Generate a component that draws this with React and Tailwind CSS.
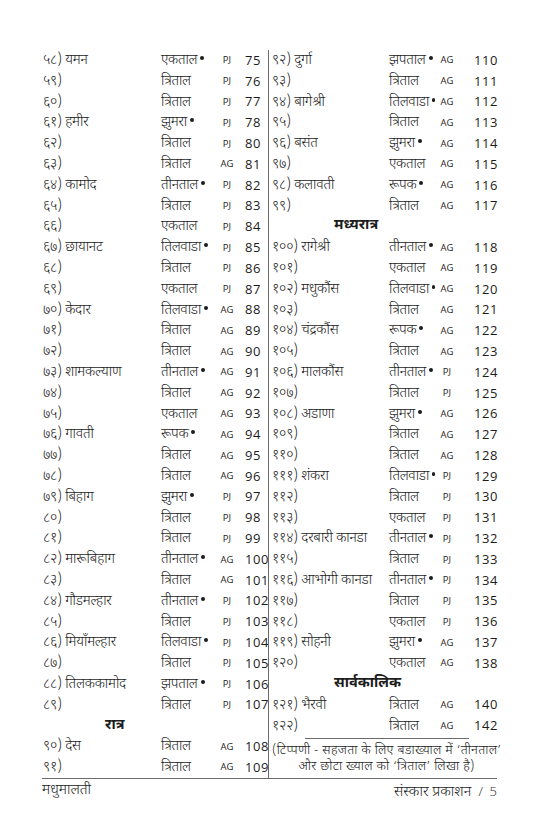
import React from 'react';

const left = [
  ['५८) यमन', 'एकताल', true, 'PJ', '75'],
  ['५९)', 'त्रिताल', false, 'PJ', '76'],
  ['६०)', 'त्रिताल', false, 'PJ', '77'],
  ['६१) हमीर', 'झुमरा', true, 'PJ', '78'],
  ['६२)', 'त्रिताल', false, 'PJ', '80'],
  ['६३)', 'त्रिताल', false, 'AG', '81'],
  ['६४) कामोद', 'तीनताल', true, 'PJ', '82'],
  ['६५)', 'त्रिताल', false, 'PJ', '83'],
  ['६६)', 'एकताल', false, 'PJ', '84'],
  ['६७) छायानट', 'तिलवाडा', true, 'PJ', '85'],
  ['६८)', 'त्रिताल', false, 'PJ', '86'],
  ['६९)', 'एकताल', false, 'PJ', '87'],
  ['७०) केदार', 'तिलवाडा', true, 'AG', '88'],
  ['७१)', 'त्रिताल', false, 'AG', '89'],
  ['७२)', 'त्रिताल', false, 'AG', '90'],
  ['७३) शामकल्याण', 'तीनताल', true, 'AG', '91'],
  ['७४)', 'त्रिताल', false, 'AG', '92'],
  ['७५)', 'एकताल', false, 'AG', '93'],
  ['७६) गावती', 'रूपक', true, 'AG', '94'],
  ['७७)', 'त्रिताल', false, 'AG', '95'],
  ['७८)', 'त्रिताल', false, 'AG', '96'],
  ['७९) बिहाग', 'झुमरा', true, 'PJ', '97'],
  ['८०)', 'त्रिताल', false, 'PJ', '98'],
  ['८१)', 'त्रिताल', false, 'PJ', '99'],
  ['८२) मारूबिहाग', 'तीनताल', true, 'AG', '100'],
  ['८३)', 'त्रिताल', false, 'AG', '101'],
  ['८४) गौडमल्हार', 'तीनताल', true, 'PJ', '102'],
  ['८५)', 'त्रिताल', false, 'PJ', '103'],
  ['८६) मियाँमल्हार', 'तिलवाडा', true, 'PJ', '104'],
  ['८७)', 'त्रिताल', false, 'PJ', '105'],
  ['८८) तिलककामोद', 'झपताल', true, 'PJ', '106'],
  ['८९)', 'त्रिताल', false, 'PJ', '107'],
  'रात्र',
  ['९०) देस', 'त्रिताल', false, 'AG', '108'],
  ['९१)', 'त्रिताल', false, 'AG', '109'],
];

const right = [
  ['९२) दुर्गा', 'झपताल', true, 'AG', '110'],
  ['९३)', 'त्रिताल', false, 'AG', '111'],
  ['९४) बागेश्री', 'तिलवाडा', true, 'AG', '112'],
  ['९५)', 'त्रिताल', false, 'AG', '113'],
  ['९६) बसंत', 'झुमरा', true, 'AG', '114'],
  ['९७)', 'एकताल', false, 'AG', '115'],
  ['९८) कलावती', 'रूपक', true, 'AG', '116'],
  ['९९)', 'त्रिताल', false, 'AG', '117'],
  'मध्यरात्र',
  ['१००) रागेश्री', 'तीनताल', true, 'AG', '118'],
  ['१०१)', 'एकताल', false, 'AG', '119'],
  ['१०२) मधुकौंस', 'तिलवाडा', true, 'AG', '120'],
  ['१०३)', 'त्रिताल', false, 'AG', '121'],
  ['१०४) चंद्रकौंस', 'रूपक', true, 'AG', '122'],
  ['१०५)', 'त्रिताल', false, 'AG', '123'],
  ['१०६) मालकौंस', 'तीनताल', true, 'PJ', '124'],
  ['१०७)', 'त्रिताल', false, 'PJ', '125'],
  ['१०८) अडाणा', 'झुमरा', true, 'AG', '126'],
  ['१०९)', 'त्रिताल', false, 'AG', '127'],
  ['११०)', 'त्रिताल', false, 'AG', '128'],
  ['१११) शंकरा', 'तिलवाडा', true, 'PJ', '129'],
  ['११२)', 'त्रिताल', false, 'PJ', '130'],
  ['११३)', 'एकताल', false, 'PJ', '131'],
  ['११४) दरबारी कानडा', 'तीनताल', true, 'PJ', '132'],
  ['११५)', 'त्रिताल', false, 'PJ', '133'],
  ['११६) आभोगी कानडा', 'तीनताल', true, 'PJ', '134'],
  ['११७)', 'त्रिताल', false, 'PJ', '135'],
  ['११८)', 'एकताल', false, 'PJ', '136'],
  ['११९) सोहनी', 'झुमरा', true, 'AG', '137'],
  ['१२०)', 'एकताल', false, 'AG', '138'],
  'सार्वकालिक',
  ['१२१) भैरवी', 'त्रिताल', false, 'AG', '140'],
  ['१२२)', 'त्रिताल', false, 'AG', '142'],
];

const deva = { fontFamily: '"Noto Sans Devanagari", "Noto Serif Devanagari", "Lohit Devanagari", "Noto Sans", sans-serif' };
const latin = { fontFamily: '"Open Sans", "Noto Sans", sans-serif' };

function Rows({ items, cols, numPad }) {
  return items.map((r, i) => {
    if (typeof r === 'string') {
      return (
        <div key={i} className="h-[20.8px] leading-[20.8px] pl-[62px] font-bold text-[14.5px]">{r}</div>
      );
    }
    const [name, taal, dot, tag, page] = r;
    return (
      <div key={i} className={`grid ${cols} h-[20.8px] items-center whitespace-nowrap`}>
        <span className="text-[14px] font-light tracking-[-0.2px]">{name}</span>
        <span className="text-[14px] font-light tracking-[-0.3px] flex items-center">
          {taal}
          {dot && <span className="inline-block w-[4px] h-[4px] rounded-full bg-[#1c1c1c] ml-[3px] mb-[5px]"></span>}
        </span>
        <span className="text-[9.5px] text-center" style={latin}>{tag}</span>
        <span className={`text-[13px] tracking-[0.6px] ${numPad}`} style={latin}>{page}</span>
      </div>
    );
  });
}

export default function App() {
  return (
    <div className="w-[535px] h-[827px] bg-white text-[#1c1c1c] pt-[50px] pl-[42px] pr-[38px]" style={deva}>
      <div className="flex border-b-[1.5px] border-[#6b6b6b]">
        <div className="w-[226px] pl-[1px]">
          <Rows items={left} cols="grid-cols-[118px_54px_24px_1fr]" numPad="pl-[6px]" />
        </div>
        <div className="flex-1 border-l-[1.5px] border-[#6b6b6b] pl-[3px]">
          <Rows items={right} cols="grid-cols-[117px_46px_24px_1fr]" numPad="pl-[15px]" />
          <div className="mx-auto w-[164px] border-t-[1.5px] border-[#6b6b6b] mt-[2px]"></div>
          <div className="text-[13px] font-light leading-[16px] text-center whitespace-nowrap mt-[4px]">
            <div className="tracking-[0.3px]">(टिप्पणी - सहजता के लिए बडाख्याल में ‘तीनताल’</div>
            <div className="tracking-[0.3px]">और छोटा ख्याल को ‘त्रिताल’ लिखा है)</div>
          </div>
        </div>
      </div>
      <div className="flex justify-between text-[14.5px] font-light leading-[22px] pt-[1px]">
        <span>मधुमालती</span>
        <span>संस्कार प्रकाशन <span style={latin} className="text-[13px]">&nbsp;/&nbsp; 5</span></span>
      </div>
    </div>
  );
}
